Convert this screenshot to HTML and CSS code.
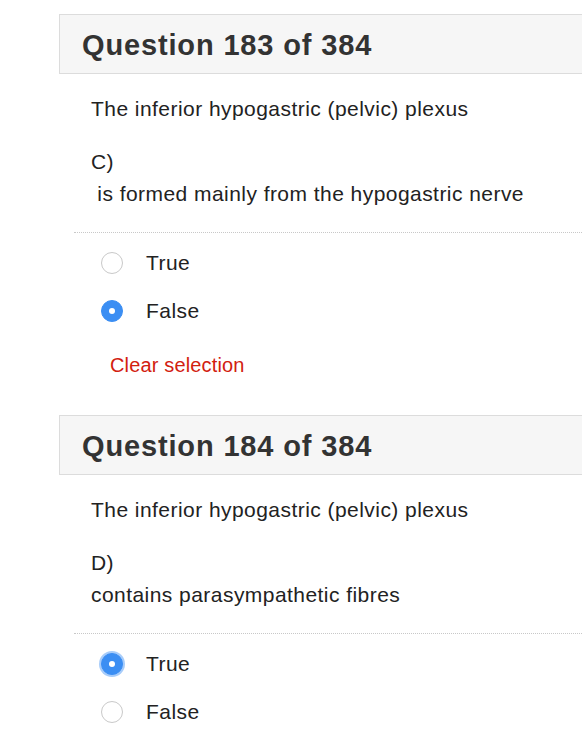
FILE: index.html
```html
<!DOCTYPE html>
<html>
<head>
<meta charset="utf-8">
<link rel="stylesheet" href="styles.css">
</head>
<body>
<section class="question">
  <h2 class="qhead">Question 183 of 384</h2>
  <div class="qbody">
    <p class="stem">The inferior hypogastric (pelvic) plexus</p>
    <p class="item">C)<br>&nbsp;is formed mainly from the hypogastric nerve</p>
  </div>
  <div class="options">
    <label class="opt"><span class="radio"></span><span>True</span></label>
    <label class="opt"><span class="radio checked"></span><span>False</span></label>
    <a class="clear">Clear selection</a>
  </div>
</section>
<section class="question second">
  <h2 class="qhead">Question 184 of 384</h2>
  <div class="qbody">
    <p class="stem">The inferior hypogastric (pelvic) plexus</p>
    <p class="item">D)<br>contains parasympathetic fibres</p>
  </div>
  <div class="options">
    <label class="opt"><span class="radio checked focus"></span><span>True</span></label>
    <label class="opt"><span class="radio"></span><span>False</span></label>
  </div>
</section>
</body>
</html>
```
FILE: styles.css
```css
html, body {
  margin: 0;
  padding: 0;
  background: #fff;
}
body {
  font-family: "Liberation Sans", Arial, Helvetica, sans-serif;
  color: #222;
  overflow: hidden;
}
.question {
  margin-left: 59px;
  padding-top: 14px;
}
.question.second {
  padding-top: 34px;
}
.qhead {
  margin: 0;
  height: 58px;
  line-height: 60px;
  border: 1px solid #dcdcdc;
  border-right: none;
  background: #f6f6f6;
  padding-left: 22px;
  font-size: 29px;
  letter-spacing: 0.85px;
  font-weight: bold;
  color: #333;
}
.qbody {
  font-size: 21px;
  letter-spacing: 0.45px;
  line-height: 32px;
  padding-bottom: 22px;
  border-bottom: 1px dotted #c8c8c8;
  margin-left: 15px;
  padding-left: 17px;
}
.stem {
  margin: 19px 0 21px;
}
.item {
  margin: 0;
}
.options {
  padding-top: 6px;
  padding-left: 42px;
  font-size: 21px;
  letter-spacing: 0.45px;
}
.opt {
  display: flex;
  align-items: center;
  height: 48px;
  gap: 23px;
}
.radio {
  width: 20px;
  height: 20px;
  border-radius: 50%;
  border: 1px solid #c9c9c9;
  background: #fff;
  box-sizing: content-box;
  position: relative;
}
.radio.checked {
  background: #3b8ef3;
  border-color: #3b8ef3;
}
.radio.checked::after {
  content: "";
  position: absolute;
  left: 7px;
  top: 7px;
  width: 6px;
  height: 6px;
  border-radius: 50%;
  background: #fff;
}
.radio.focus {
  box-shadow: 0 0 0 2px rgba(59, 142, 243, 0.45);
}
.clear {
  display: block;
  margin-left: 9px;
  margin-top: 14px;
  line-height: 32px;
  font-size: 20px;
  letter-spacing: 0.15px;
  color: #d2200f;
}
```
